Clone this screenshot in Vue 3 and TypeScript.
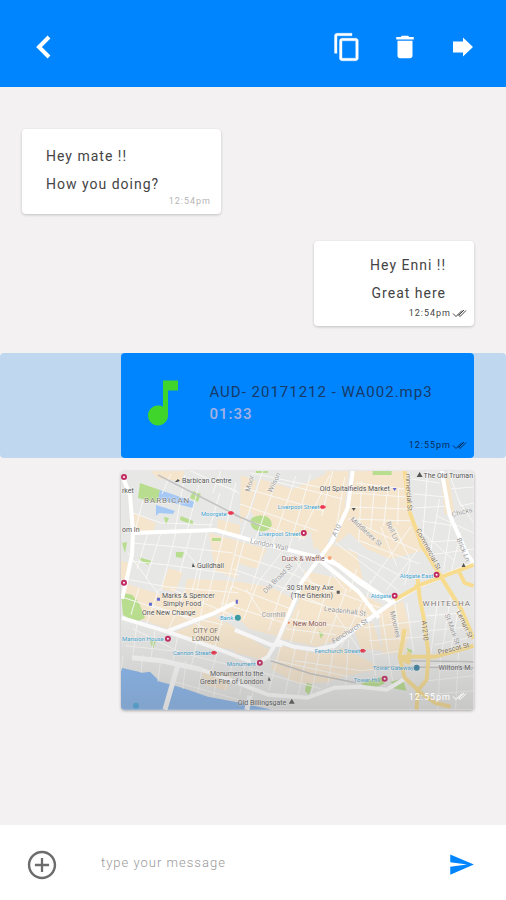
<script setup lang="ts">
import { ref } from 'vue'

interface MapLabel {
  text: string
  x: number
  y: number
  kind: 'poi' | 'station' | 'food' | 'area' | 'street' | 'main'
  turn?: number
}

const draft = ref('')

const labels: MapLabel[] = [
  { text: 'Barbican Centre', x: 61, y: 12, kind: 'poi' },
  { text: 'BARBICAN', x: 23, y: 32, kind: 'area' },
  { text: 'rket', x: 1, y: 22, kind: 'poi' },
  { text: 'om In', x: 1, y: 61, kind: 'poi' },
  { text: 'Moorgate', x: 80, y: 45, kind: 'station' },
  { text: 'Liverpool Street', x: 157, y: 38, kind: 'station' },
  { text: 'Liverpool Street', x: 138, y: 65, kind: 'station' },
  { text: 'Old Spitalfields Market', x: 199, y: 20, kind: 'poi' },
  { text: 'The Old Truman', x: 303, y: 7, kind: 'poi' },
  { text: 'Guildhall', x: 76, y: 97, kind: 'poi' },
  { text: 'Duck & Waffle', x: 161, y: 90, kind: 'food' },
  { text: '30 St Mary Axe', x: 166, y: 119, kind: 'poi' },
  { text: '(The Gherkin)', x: 170, y: 127, kind: 'poi' },
  { text: 'Marks & Spencer', x: 41, y: 127, kind: 'poi' },
  { text: 'Simply Food', x: 42, y: 135, kind: 'poi' },
  { text: 'One New Change', x: 21, y: 144, kind: 'poi' },
  { text: 'CITY OF', x: 72, y: 162, kind: 'main' },
  { text: 'LONDON', x: 71, y: 170, kind: 'main' },
  { text: 'Bank', x: 99, y: 149, kind: 'station' },
  { text: 'Mansion House', x: 1, y: 170, kind: 'station' },
  { text: 'Cannon Street', x: 52, y: 184, kind: 'station' },
  { text: 'Monument', x: 106, y: 195, kind: 'station' },
  { text: 'Monument to the', x: 89, y: 205, kind: 'poi' },
  { text: 'Great Fire of London', x: 79, y: 213, kind: 'poi' },
  { text: 'Old Billingsgate', x: 117, y: 234, kind: 'poi' },
  { text: 'New Moon', x: 172, y: 155, kind: 'food' },
  { text: 'Cornhill', x: 141, y: 146, kind: 'street' },
  { text: 'Fenchurch Street', x: 194, y: 182, kind: 'station' },
  { text: 'Aldgate East', x: 279, y: 107, kind: 'station' },
  { text: 'Aldgate', x: 250, y: 127, kind: 'station' },
  { text: 'WHITECHA', x: 302, y: 135, kind: 'area' },
  { text: 'Tower Gateway', x: 252, y: 199, kind: 'station' },
  { text: 'Tower Hill', x: 233, y: 211, kind: 'station' },
  { text: "Wilton's M.", x: 318, y: 199, kind: 'poi' },
  { text: 'Prescot St', x: 318, y: 184, kind: 'main', turn: -14 },
  { text: 'Leman St', x: 336, y: 141, kind: 'main', turn: 66 },
  { text: 'A1210', x: 301, y: 150, kind: 'main', turn: 84 },
  { text: 'St Mark St', x: 324, y: 144, kind: 'street', turn: 70 },
  { text: 'Minories', x: 269, y: 141, kind: 'street', turn: 76 },
  { text: 'mmercial St', x: 285, y: 3, kind: 'main', turn: 87 },
  { text: 'Commercial St', x: 295, y: 59, kind: 'main', turn: 62 },
  { text: 'Chicks', x: 332, y: 46, kind: 'street', turn: -14 },
  { text: 'Brick Ln', x: 336, y: 68, kind: 'street', turn: 68 },
  { text: 'London Wall', x: 129, y: 72, kind: 'street', turn: 12 },
  { text: 'Middlesex St', x: 229, y: 49, kind: 'street', turn: 42 },
  { text: 'Bell Ln', x: 265, y: 52, kind: 'street', turn: 64 },
  { text: 'Old Broad St', x: 145, y: 123, kind: 'street', turn: -46 },
  { text: 'Wilson', x: 151, y: 22, kind: 'street', turn: -65 },
  { text: 'A10', x: 215, y: 66, kind: 'street', turn: -64 },
  { text: 'Moor', x: 129, y: 21, kind: 'street', turn: -75 },
  { text: 'Leadenhall St', x: 203, y: 140, kind: 'street', turn: 7 },
  { text: 'Fenchurch St', x: 213, y: 173, kind: 'street', turn: -32 },
]

const undergroundStops: [number, number][] = [
  [3, 6], [3, 112], [183, 62], [47, 168], [139, 192], [274, 125], [316, 104], [264, 208],
]
const railStops: [number, number][] = [[110, 42], [202, 36], [93, 182], [242, 180]]
</script>

<template>
  <main class="screen">
    <header class="bar">
      <button class="icon-button" type="button" aria-label="Back">
        <svg viewBox="0 0 30 30"><path d="M20 5 10 15 20 25" fill="none" stroke="currentColor" stroke-width="4" /></svg>
      </button>
      <div class="actions">
        <button class="icon-button" type="button" aria-label="Copy">
          <svg viewBox="0 0 24 24"><path fill="currentColor" d="M16 1H4c-1.100 0-2 .9-2 2v14h2V3h12V1zm3 4H8c-1.100 0-2 .9-2 2v14c0 1.100.9 2 2 2h11c1.100 0 2-.9 2-2V7c0-1.100-.9-2-2-2zm0 16H8V7h11v14z" stroke="currentColor" stroke-width="0.300" /></svg>
        </button>
        <button class="icon-button" type="button" aria-label="Delete">
          <svg viewBox="0 0 24 24"><path fill="currentColor" d="M6 19c0 1.100.9 2 2 2h8c1.100 0 2-.9 2-2V7H6v12zM19 4h-3.500l-1-1h-5l-1 1H5v2h14V4z" /></svg>
        </button>
        <button class="icon-button" type="button" aria-label="Forward">
          <svg viewBox="0 0 30 30"><path fill="currentColor" d="M5 9.500h10V5.500L25 15 15 24.500v-4H5z" /></svg>
        </button>
      </div>
    </header>

    <section class="thread" aria-label="Conversation">
      <article class="bubble incoming">
        <p>Hey mate !!</p>
        <p>How you doing?</p>
        <footer class="stamp faint"><time>12:54pm</time></footer>
      </article>

      <article class="bubble outgoing">
        <p>Hey Enni !!</p>
        <p>Great here</p>
        <footer class="stamp">
          <time>12:54pm</time>
          <svg class="ticks" viewBox="0 0 15 9"><path d="M1 4.500 4 7.500 10 1.500M6 5.500 8 7.500 14 1.500M7 6 12 1" /></svg>
        </footer>
      </article>

      <div class="selected">
        <article class="audio wide">
          <div class="track">
            <svg class="note" viewBox="0 0 24 24"><path fill="#3fd52b" d="M12 3v10.550c-.59-.34-1.270-.55-2-.55-2.210 0-4 1.790-4 4s1.790 4 4 4 4-1.790 4-4V7h4V3h-6z" /></svg>
            <div>
              <p class="name">AUD- 20171212 - WA002.mp3</p>
              <p class="length">01:33</p>
            </div>
          </div>
          <footer class="stamp">
            <time>12:55pm</time>
            <svg class="ticks" viewBox="0 0 15 9"><path d="M1 4.500 4 7.500 10 1.500M6 5.500 8 7.500 14 1.500M7 6 12 1" /></svg>
          </footer>
        </article>
      </div>

      <article class="place wide">
        <svg class="map" viewBox="0 0 353 239" preserveAspectRatio="xMidYMid slice" role="img" aria-label="Map of the City of London">
          <defs>
            <linearGradient id="shade" x1="0" y1="0" x2="0" y2="1">
              <stop offset="0.600" stop-color="#777" stop-opacity="0" />
              <stop offset="1" stop-color="#777" stop-opacity="0.280" />
            </linearGradient>
          </defs>
          <rect width="353" height="239" fill="#e7e7e6" />

          <g fill="#f5e5cd">
            <path d="M30 0H64L60 10 37 8z M13 42 35 52 33 60 14 60z M97 48 119 54 119 64 96 59z M120 4 136 10 129 40 119 52z M140 8 172 18 207 2 200 50 182 68 140 58 130 40z" />
            <path d="M205 0H228L223 42 206 72 193 78 190 60 203 38z M234 0H284L288 45 301 80 270 88 246 78 229 62 214 74z" />
            <path d="M116 70 146 78 136 98 116 92z M190 66 236 82 243 112 205 90z M48 97 62 102 54 122 40 118z M66 108 110 110 118 132 106 145 60 140z M88 62 118 70 116 108 94 100z" />
            <path d="M0 90 8 92 7 106 0 110z M2 112 40 124 84 120 95 140 47 158 12 146z M52 162 94 145 112 160 118 180 92 176z" />
            <path d="M112 110 150 116 172 128 158 166 128 158 104 136z M184 100 220 108 238 122 262 134 222 168 195 176 160 168 178 130z" />
            <path d="M104 150 124 164 150 180 146 190 114 182z M160 175 196 183 222 177 240 186 262 198 230 204 204 212 176 213 150 198z" />
            <path d="M258 142 282 130 290 158 284 182 262 184z M232 155 252 152 262 180 240 178z M320 4 328 4 334 42 324 44z M80 198 112 204 106 220 84 214z M290 44 300 60 308 83 300 80z" />
          </g>

          <g fill="#b8dd8e">
            <path d="M19 12 39 19 37 32 17 27z M72 20 80 23 77 31 69 27z M130 48c8-6 21-4 21 6-3 9-20 8-21-1z M60 45 72 50 72 54 59 49z M43 46 48 47 45 54z M18 86 24 88 31 90 27 94 19 89z M55 81h8l-2 6-6-1z M1 72 6 71 4 82z M91 67h9v3h-9z" />
            <path d="M0 122 11 124 18 132 24 147 14 152 2 144z M29 170h6l-3 9z M186 212 192 214 188 224 184 220z M198 160 203 163 200 168z M286 177 292 180 289 185z M240 213 260 206 264 213 251 218z M270 211 282 208 286 220 274 218z M252 0h19v4h-19z M135 0h12v2h-12z" />
          </g>
          <g fill="#a5c8f5">
            <path d="M39 19 74 31 72 37 37 28z M35 34 54 40 52 43 38 42 35 45z" />
          </g>
          <path fill="#86b5ed" d="M0 197 22 202 29 201 39 211 51 214 67 219 87 226 119 232 151 239H0z" />

          <g class="lane">
            <path d="M64 4 54 60M78 14 66 60M99 22 88 60M115 12 104 60M22 30 14 60M50 3 41 23M12 42 40 52 92 54M70 0 118 22M100 0 92 22M84 8 116 20" />
            <path d="M27 62 16 98M40 62 25 108M55 62 40 120M70 62 59 102M86 62 70 125M103 62 86 130M118 66 100 140M10 72 56 76 112 82M8 90 45 94 118 104M4 108 46 116 118 122M7 82 38 124M62 78 80 98 76 120" />
            <path d="M0 126 50 142 102 154M18 117 10 144M38 118 26 152M64 120 48 158M84 124 75 168M110 116 94 176M55 142 85 158M50 118 110 144M30 134 72 148M12 158 60 182M16 152 12 184M34 160 30 188M57 164 52 190M76 172 70 197M97 180 90 202M5 175 52 180 108 194" />
            <path d="M142 0 120 65M158 3 134 70M175 5 151 75M190 3 168 78M209 4 178 70M123 17 203 40M119 33 197 60M121 48 184 68M152 10 222 28M212 0 201 45M224 6 216 55M130 2 207 18" />
            <path d="M124 68 110 120M144 73 130 120M162 80 137 112 122 150M184 86 160 122 148 160M114 84 157 97 208 119M112 98 150 112 202 134M110 115 170 138M100 132 163 152M125 118 142 144M170 84 190 110" />
            <path d="M235 12 284 18M232 22 285 26M229 36 288 38M227 48 291 50M241 10 238 72M254 14 250 58M267 18 263 55M278 18 277 54M245 56 297 80M239 70 299 93M228 78 282 106M290 56 250 112M274 56 290 90 284 114M260 56 276 95M298 78 266 119M215 72 278 120" />
            <path d="M291 8 319 12M293 23 325 26M294 37 328 35M301 50 335 55M308 71 343 69M307 0 302 68M319 28 309 86M332 40 323 99M340 62 330 104M328 0 340 35 353 32M330 18 353 16M337 28 353 52M300 60 334 90M316 45 353 62M310 84 353 78" />
            <path d="M210 105 190 173M226 118 203 178M241 132 220 177M190 112 265 139M181 128 252 150M169 148 235 158M165 158 215 164M178 139 170 172M214 142 240 181M205 95 225 120M236 98 229 121M250 110 242 146" />
            <path d="M161 171 148 220M175 176 164 224M187 179 177 226M199 180 190 226M213 177 207 214M228 169 225 214M147 188 228 206M128 198 200 218M112 192 104 220M124 194 119 224M136 198 131 228M174 190 240 200 282 195" />
            <path d="M247 144 255 205M260 137 272 210M274 132 282 185M286 132 293 181M243 157 300 150M248 170 302 166M253 184 281 180M317 130 310 185M330 126 321 183M338 138 330 180M306 145 345 142M307 160 350 156M314 174 353 166M260 200 279 194M310 195 353 190M307 210 353 205M320 187 317 239M338 181 335 239M308 224 353 220" />
            <path d="M2 185 0 200M22 184 20 202M40 187 37 211M65 190 62 218M81 198 77 222M96 202 93 226M50 210 118 229" />
          </g>

          <path d="M37 4 119 46M114 44 140 55M150 190 190 203 235 212M282 190 353 191M254 196 353 197" fill="none" stroke="#c3c3c3" stroke-width="1.500" />

          <g class="road">
            <path d="M1 4 9 24 12 61 11 84 6 107 1 128M12 62 94 59 119 66 147 74 200 87 217 94 239 112 264 128" />
            <path d="M232 0 227 37 211 71 181 111 174 129 157 169 147 186 135 193" />
            <path d="M157 170 173 176 194 179 214 175 240 154 274 130 296 117M195 86 238 121 258 147M208 88 250 117 270 131" />
            <path d="M1 147 47 161 94 177 130 191M47 160 94 142 114 132M114 159 150 174 162 174" />
            <path d="M321 0 329 44 347 84 353 92M296 116 353 93" />
            <path d="M81 199 114 211 147 224 187 227 214 217 239 216 266 219 286 207" />
          </g>
          <path d="M11 187 41 190 81 199M57 194 44 239M129 225 126 239" fill="none" stroke="#fafafa" stroke-width="5" />

          <g class="highway">
            <path d="M284 0 289 41 301 74 321 107 341 139 353 168" />
            <path d="M294 116 321 106 353 94M338 100 344 112 353 115M297 108 299 126 304 152 308 185 306 209 297 220 296 239" />
            <path d="M274 129 297 116M280 186 314 186 353 175M284 158 279 186 284 207 297 219M297 220 314 232 330 236M278 186 288 192 288 181" />
          </g>

          <g>
            <circle v-for="([x, y], i) in undergroundStops" :key="`u${i}`" :cx="x" :cy="y" r="2" fill="#fff" stroke="#c22b62" stroke-width="2" />
            <path v-for="([x, y], i) in railStops" :key="`r${i}`" :d="`M${x - 3} ${y}h6M${x - 1} ${y - 1}h2v2h-2z`" fill="none" stroke="#ec3652" stroke-width="1.500" />
            <circle cx="117" cy="147" r="3" fill="#3c9ba4" />
            <circle cx="296" cy="197" r="3" fill="#3c83a4" />
            <circle cx="15" cy="235" r="3" fill="#4aa8df" />
            <circle cx="209" cy="87" r="2" fill="#f6a77a" />
            <circle cx="168" cy="152" r="1" fill="#f08060" />
            <path d="M36 127h3v3h-3zM28 132h3v3h-3zM272 17h4l-2 3zM115 129h2v4h-2z" fill="#6168d3" />
            <path d="M54 11l3-3 2 2-3 1zM296 6l3-5 3 5zM71 96l1-4 2 4zM231 37h4l-2 3zM216 120h3v3h-3zM168 233l3-5 3 5zM147 210l1-4 2 4zM341 96h4l-2-4z" fill="#555" />
          </g>

          <g>
            <text
              v-for="(label, i) in labels"
              :key="i"
              :x="label.x"
              :y="label.y"
              :class="['label', label.kind]"
              :transform="label.turn ? `rotate(${label.turn} ${label.x} ${label.y})` : undefined"
            >{{ label.text }}</text>
          </g>
          <rect width="353" height="239" fill="url(#shade)" />
        </svg>
        <footer class="stamp light">
          <time>12:55pm</time>
          <svg class="ticks" viewBox="0 0 15 9"><path d="M1 4.500 4 7.500 10 1.500M6 5.500 8 7.500 14 1.500M7 6 12 1" /></svg>
        </footer>
      </article>
    </section>

    <form class="composer" @submit.prevent="draft = ''">
      <button class="attach" type="button" aria-label="Add attachment">
        <svg viewBox="0 0 24 24"><path fill="currentColor" d="M12.800 7h-1.600v4.200H7v1.600h4.200V17h1.600v-4.200H17v-1.600h-4.200V7zM12 2C6.480 2 2 6.480 2 12s4.480 10 10 10 10-4.480 10-10S17.520 2 12 2zm0 18.300c-4.580 0-8.300-3.720-8.300-8.300S7.420 3.700 12 3.700s8.300 3.720 8.300 8.300-3.720 8.300-8.300 8.300z" /></svg>
      </button>
      <input v-model="draft" type="text" aria-label="Message" placeholder="type your message" />
      <button class="send" type="submit" aria-label="Send">
        <svg viewBox="0 0 24 24"><path fill="currentColor" d="M2 21 23 12 2 3v7l15 2-15 2z" /></svg>
      </button>
    </form>
  </main>
</template>

<style>
body {
  margin: 0;
}
</style>

<style scoped>
.screen {
  display: flex;
  flex-direction: column;
  min-height: 100vh;
  background: #f3f1f2;
  color: #444;
  font-family: Roboto, "Liberation Sans", sans-serif;
  font-size: 14px;
  letter-spacing: 1px;
}

button {
  display: block;
  padding: 0;
  border: 0;
  background: none;
  color: inherit;
  cursor: pointer;
}

button svg {
  display: block;
  width: 100%;
  height: 100%;
}

p {
  margin: 0;
}

.bar {
  display: flex;
  align-items: center;
  justify-content: space-between;
  box-sizing: border-box;
  height: 87px;
  padding: 6px 28px 0 29px;
  background: #0085ff;
  color: #fff;
}

.actions {
  display: flex;
  gap: 28px;
}

.icon-button {
  width: 30px;
  height: 30px;
}

.thread {
  display: flex;
  flex: 1;
  flex-direction: column;
  padding: 42px 0 28px;
}

.bubble {
  box-sizing: border-box;
  min-height: 85px;
  border-radius: 4px;
  background: #fff;
  box-shadow: 0 1px 3px rgba(0, 0, 0, 0.2);
  line-height: 28px;
}

.incoming {
  align-self: flex-start;
  min-width: 199px;
  margin-left: 22px;
  padding: 13px 28px 4px 24px;
}

.outgoing {
  align-self: flex-end;
  min-width: 160px;
  margin: 27px 32px 27px 0;
  padding: 10px 28px 6px;
  text-align: right;
}

.stamp {
  display: flex;
  align-items: center;
  justify-content: flex-end;
  gap: 1px;
  font-size: 9px;
  line-height: 12px;
}

.incoming .stamp {
  margin-top: -3px;
  margin-right: -18px;
}

.outgoing .stamp {
  margin-right: -21px;
}

.stamp.faint {
  color: #b5b5b5;
}

.ticks {
  width: 15px;
  height: 9px;
  fill: none;
  stroke: currentColor;
  stroke-width: 1;
}

.wide {
  margin-right: 32px;
  margin-left: 24%;
  border-radius: 4px;
}

.selected {
  border-radius: 4px;
  background: #bfd8ef;
}

.audio {
  box-sizing: border-box;
  min-height: 105px;
  padding: 18px 7px 7px 12px;
  background: #0085ff;
  color: #183a67;
}

.audio .stamp {
  margin-top: 4px;
  color: #082b57;
}

.track {
  display: flex;
  align-items: center;
  gap: 16px;
  height: 64px;
}

.note {
  flex: none;
  width: 60px;
  height: 60px;
}

.name,
.length {
  font-size: 15px;
  line-height: 22px;
}

.length {
  color: #a5b1e2;
  font-weight: 500;
}

.place {
  position: relative;
  margin-top: 13px;
  overflow: hidden;
  box-shadow: 0 1px 3px rgba(0, 0, 0, 0.3);
}

.map {
  display: block;
  width: 100%;
  height: auto;
}

.place .stamp {
  position: absolute;
  right: 7px;
  bottom: 7px;
}

.stamp.light {
  color: #fff;
}

.lane {
  fill: none;
  stroke: #f8f7f4;
  stroke-width: 1;
}

.road {
  fill: none;
  stroke: #fff;
  stroke-width: 4;
  stroke-linejoin: round;
}

.highway {
  fill: none;
  stroke: #f7dc8f;
  stroke-width: 4;
  stroke-linejoin: round;
}

.label {
  fill: #555;
  font-size: 7px;
  letter-spacing: 0;
  paint-order: stroke;
  stroke: rgba(255, 255, 255, 0.6);
  stroke-width: 1px;
}

.label.station {
  fill: #43a3cf;
  font-size: 6px;
}

.label.food {
  fill: #8b5750;
}

.label.area {
  fill: #837c76;
  font-size: 8px;
  letter-spacing: 1px;
}

.label.street {
  fill: #999;
}

.label.main {
  fill: #806f55;
}

.composer {
  display: flex;
  align-items: center;
  box-sizing: border-box;
  height: 75px;
  padding: 4px 31px 0 25px;
  background: #fff;
}

.attach {
  flex: none;
  width: 34px;
  height: 34px;
  color: #6c6c6c;
}

.send {
  flex: none;
  width: 27px;
  height: 27px;
  color: #0085ff;
}

.composer input {
  flex: 1;
  min-width: 0;
  margin: 0 16px 4px 42px;
  padding: 0;
  border: 0;
  outline: 0;
  background: none;
  color: #333;
  font: inherit;
  font-size: 13px;
  letter-spacing: 1px;
}

.composer input::placeholder {
  color: #999;
  font-weight: 300;
  opacity: 1;
}
</style>
